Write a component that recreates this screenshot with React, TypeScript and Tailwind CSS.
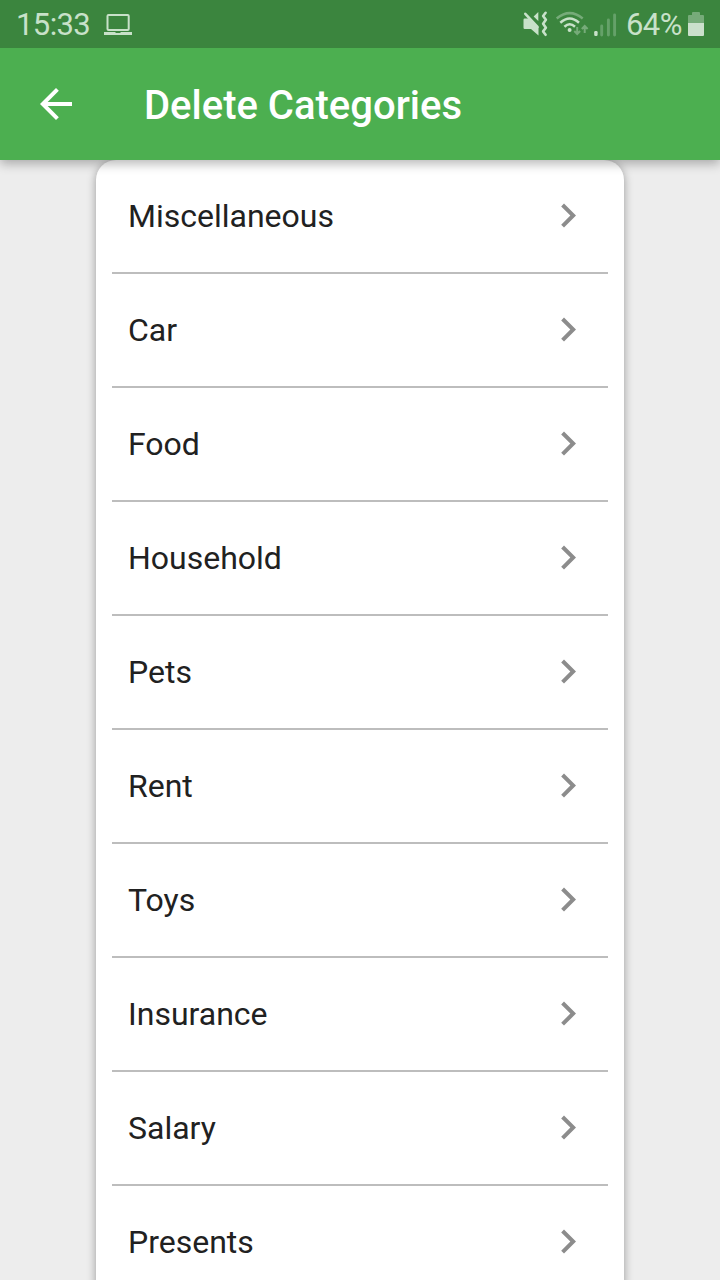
const categories = [
  'Miscellaneous', 'Car', 'Food', 'Household', 'Pets',
  'Rent', 'Toys', 'Insurance', 'Salary', 'Presents',
];

function LaptopIcon() {
  return (
    <svg className="ml-[13px] h-12 w-7" viewBox="104 0 28 48" fill="none">
      <rect x="107.5" y="14.9" width="21.2" height="15.2" rx="1" stroke="#c8e1c9" strokeWidth="2" />
      <path d="M104 32h11.5v1h5v-1H132v3h-28z" fill="#c8e1c9" />
    </svg>
  );
}

function StatusIcons() {
  return (
    <svg className="h-12 w-[96px]" viewBox="522 0 96 48" fill="none">
      <path d="M524.700 18.500h5.300l8.500 8.500v8.500l-7.500-6.500h-6.300q-1.200 0-1.200-1.200v-8.100q0-1.200 1.200-1.200z" fill="#c8e1c9" />
      <path d="M533.600 16.500L538.300 12V21z" fill="#c8e1c9" />
      <path d="M525.300 13.800L537.500 27" stroke="#c8e1c9" strokeWidth="2.600" strokeLinecap="round" />
      <path d="M545.600 12.800l-2.500 3.200 2.800 3.700-2.800 4 2.800 4-2.800 3.700 2.500 3.400" stroke="#c8e1c9" strokeWidth="2.600" strokeLinejoin="round" strokeLinecap="round" />
      <path d="M556.700 18.500Q569.700 7.800 582.700 18.500" stroke="#76ab79" strokeWidth="2.500" />
      <path d="M560.300 22.700Q569.700 14.300 579 22.700M564.400 26.700Q569.700 21.900 575 26.700" stroke="#c8e1c9" strokeWidth="2.500" />
      <circle cx="569.600" cy="29.900" r="2" fill="#c8e1c9" />
      <path d="M577.200 27v6.500M574.300 31l2.900 3 2.900-3M584.700 33v-6.500M581.800 29l2.900-3 2.900 3" stroke="#76ab79" strokeWidth="2" />
      <rect x="594.200" y="31" width="3.400" height="5" rx="1.200" fill="#c8e1c9" />
      <path d="M601.700 26v9M608.400 20v15M614.600 15v20" stroke="#65a169" strokeWidth="2.900" strokeLinecap="round" />
    </svg>
  );
}

function BatteryIcon() {
  return (
    <svg className="h-12 w-4" viewBox="688 0 16 48">
      <path d="M688 23v-7q0-1 1-1h3v-2q0-1 1-1h6q1 0 1 1v2h3q1 0 1 1v7z" fill="#76ab79" />
      <path d="M688 23h16v12q0 1-1 1h-14q-1 0-1-1z" fill="#cbe0cc" />
    </svg>
  );
}

function StatusBar() {
  return (
    <div className="flex h-12 items-center bg-[#3b853e] pl-4 pr-4 text-[31px] tracking-[-0.6px] text-[#c8e1c9]">
      <span className="w-[75px] whitespace-nowrap pt-0.5">15:33</span>
      <LaptopIcon />
      <div className="ml-auto flex items-center">
        <StatusIcons />
        <span className="ml-2 w-[62px] whitespace-nowrap pt-0.5">64%</span>
        <BatteryIcon />
      </div>
    </div>
  );
}

function AppBar() {
  return (
    <header className="flex h-28 items-center bg-[#4caf50] pl-8 text-white">
      <button aria-label="Back" className="h-12 w-12">
        <svg className="h-12 w-12" viewBox="0 0 24 24" fill="currentColor">
          <path d="M20 11H7.830l5.590-5.590L12 4l-8 8 8 8 1.410-1.410L7.830 13H20v-2z" />
        </svg>
      </button>
      <h1 className="ml-16 whitespace-nowrap pt-1 text-[40px] font-medium">Delete Categories</h1>
    </header>
  );
}

function CategoryRow({ name }: { name: string }) {
  return (
    <li className="flex h-[114px] items-center justify-between border-b-2 border-[#bdbdbd] px-4 text-[32px] text-[#212121]">
      <span>{name}</span>
      <svg className="h-12 w-12" viewBox="0 0.2 24 24" fill="#8c8c8c">
        <path d="M10 6L8.590 7.410 13.170 12l-4.580 4.590L10 18l6-6z" />
      </svg>
    </li>
  );
}

export default function App() {
  return (
    <div className="flex h-[1280px] w-[720px] flex-col overflow-hidden bg-[#ededed] font-[Roboto,sans-serif]">
      <div className="relative z-10 shrink-0 shadow-[0_4px_10px_rgba(0,0,0,0.28)]">
        <StatusBar />
        <AppBar />
      </div>
      <main className="min-h-0 flex-1">
        <ul className="mx-24 rounded-[20px] bg-white px-4 shadow-[0_2px_10px_rgba(0,0,0,0.36)]">
          {categories.map((name) => <CategoryRow key={name} name={name} />)}
        </ul>
      </main>
    </div>
  );
}
